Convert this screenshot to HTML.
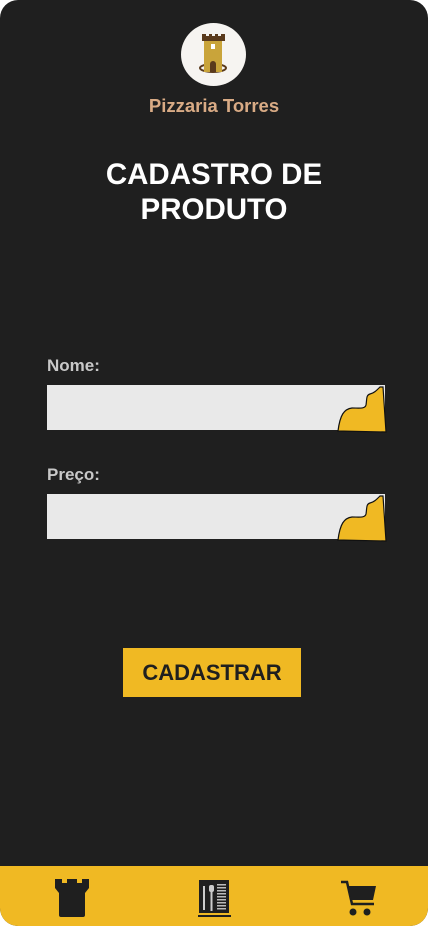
<!DOCTYPE html>
<html><head><meta charset="utf-8"><style>
html,body{margin:0;padding:0;background:#fff;}
.page{position:relative;width:428px;height:926px;background:#1f1f1f;border-radius:18px;overflow:hidden;font-family:"Liberation Sans",sans-serif;}
.logo{position:absolute;left:181px;top:23px;width:65px;height:63px;border-radius:50%;background:#f6f4f1;}
.brand{position:absolute;left:0;width:428px;top:95px;text-align:center;color:#d9ab85;font-weight:bold;font-size:18.5px;}
.title{position:absolute;left:0;width:428px;top:157px;text-align:center;color:#fff;font-weight:bold;font-size:29.5px;line-height:35px;}
.lbl{position:absolute;left:47px;color:#c8c8c8;font-weight:bold;font-size:17px;}
.inp{position:absolute;left:47px;width:338px;height:45px;background:#e9e9e9;}
.corner{position:absolute;left:336px;width:52px;height:48px;}
.btn{position:absolute;left:123px;top:648px;width:178px;height:49px;background:#f0b923;color:#1f1f1f;font-weight:bold;font-size:22px;text-align:center;line-height:50px;}
.nav{position:absolute;left:0;top:866px;width:428px;height:60px;background:#f0b923;}
</style></head><body><div class="page">
<div class="logo"><svg width="65" height="63" viewBox="0 0 65 63">
<ellipse cx="32" cy="45" rx="13" ry="4" fill="none" stroke="#5a3a1c" stroke-width="2"/>
<path d="M21 11h4v2h3v-2h3v2h3v-2h3v2h3v-2h4v7h-23z" fill="#5a3a1c"/>
<rect x="23" y="18" width="18" height="31" fill="#c9a43a"/>
<rect x="30" y="21" width="4" height="5" fill="#fff"/>
<path d="M29 49v-8a3 3 0 0 1 6 0v8z" fill="#5a3a1c"/>
</svg></div>
<div class="brand">Pizzaria Torres</div>
<div class="title">CADASTRO DE<br>PRODUTO</div>
<div class="lbl" style="top:356px">Nome:</div>
<div class="inp" style="top:385px"></div>
<svg class="corner" style="top:385px" viewBox="0 0 52 48"><path d="M44 2 C40 6 38 8 34 9 C30 10 31 14 30 20 C29 24 24 23 16 23 C8 24 4 30 2 46 L50 47 L47 2 Z" fill="#f0b923" stroke="#111" stroke-width="1.2"/></svg>
<div class="lbl" style="top:465px">Preço:</div>
<div class="inp" style="top:494px"></div>
<svg class="corner" style="top:494px" viewBox="0 0 52 48"><path d="M44 2 C40 6 38 8 34 9 C30 10 31 14 30 20 C29 24 24 23 16 23 C8 24 4 30 2 46 L50 47 L47 2 Z" fill="#f0b923" stroke="#111" stroke-width="1.2"/></svg>
<div class="btn">CADASTRAR</div>
<div class="nav">
<svg style="position:absolute;left:55px;top:13px" width="34" height="39" viewBox="0 0 34 39"><path d="M0 0h7v4h5v-4h10v4h5v-4h7v9l-4 5v22a2 2 0 0 1-2 2h-22a2 2 0 0 1-2-2v-22l-4-5z" fill="#1f1f1f"/></svg>
<svg style="position:absolute;left:198px;top:14px" width="33" height="38" viewBox="0 0 33 38"><rect x="1" y="0" width="30" height="33" fill="#1f1f1f"/><rect x="0" y="35" width="33" height="2" fill="#1f1f1f"/><rect x="5" y="6" width="2" height="24" fill="#ccc"/><rect x="11" y="5" width="5" height="7" rx="2" fill="#ccc"/><rect x="12.5" y="11" width="2" height="20" fill="#ccc"/><g fill="#bbb"><rect x="19" y="4" width="9" height="1.5"/><rect x="19" y="7" width="9" height="1.5"/><rect x="19" y="10" width="9" height="1.5"/><rect x="19" y="13" width="9" height="1.5"/><rect x="19" y="16" width="9" height="1.5"/><rect x="19" y="19" width="9" height="1.5"/><rect x="19" y="22" width="9" height="1.5"/><rect x="19" y="25" width="9" height="1.5"/><rect x="19" y="28" width="9" height="1.5"/></g></svg>
<svg style="position:absolute;left:340px;top:14px" width="38" height="37" viewBox="0 0 38 37"><path d="M1 2h6l5 22h22" fill="none" stroke="#1f1f1f" stroke-width="2.5"/><path d="M8 6h28l-3 14h-22z" fill="#1f1f1f"/><circle cx="13" cy="32" r="3.5" fill="#1f1f1f"/><circle cx="27" cy="32" r="3.5" fill="#1f1f1f"/></svg>
</div>
</div></body></html>
